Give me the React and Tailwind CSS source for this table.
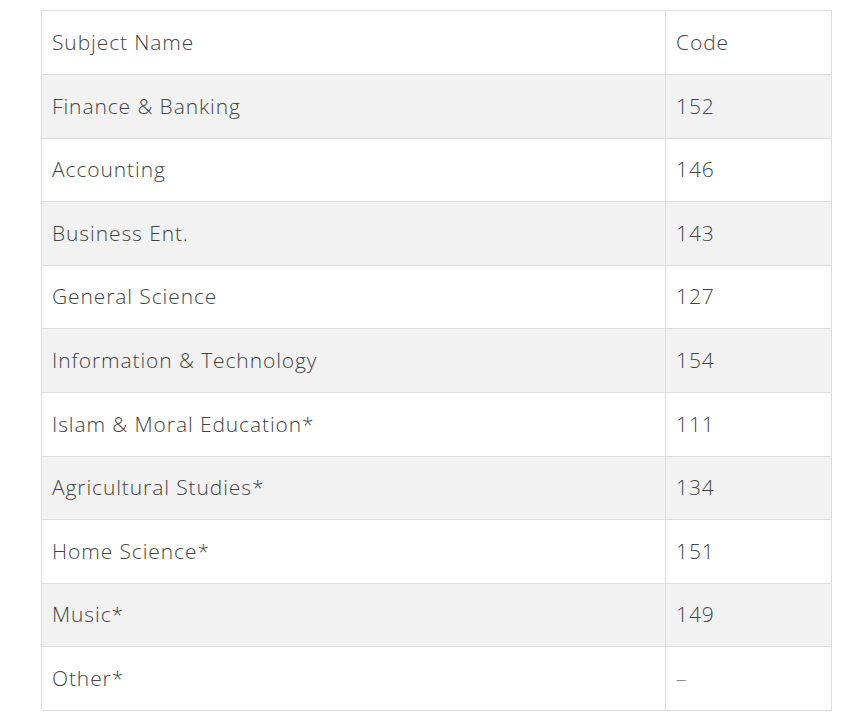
const rows = [
  ["Finance & Banking", "152"],
  ["Accounting", "146"],
  ["Business Ent.", "143"],
  ["General Science", "127"],
  ["Information & Technology", "154"],
  ["Islam & Moral Education*", "111"],
  ["Agricultural Studies*", "134"],
  ["Home Science*", "151"],
  ["Music*", "149"],
  ["Other*", "–"],
];

export default function App() {
  return (
    <div className="min-h-screen bg-white pt-[10px] pl-[41px] font-['Open_Sans',sans-serif]">
      <table className="w-[791px] border-collapse border border-[#dddddd] text-[21px] font-light tracking-[0.9px] text-[#444444]">
        <thead>
          <tr className="h-[64px]">
            <th className="border border-[#dddddd] px-[10px] text-left font-light">Subject Name</th>
            <th className="w-[166px] border border-[#dddddd] px-[10px] text-left font-light">Code</th>
          </tr>
        </thead>
        <tbody>
          {rows.map(([name, code], i) => (
            <tr key={name} className={`h-[63.6px] ${i % 2 === 0 ? "bg-[#f2f2f2]" : "bg-white"}`}>
              <td className="border border-[#dddddd] px-[10px]">{name}</td>
              <td className={`border border-[#dddddd] px-[10px] ${code === "–" ? "text-[#888888]" : ""}`}>{code}</td>
            </tr>
          ))}
        </tbody>
      </table>
    </div>
  );
}
